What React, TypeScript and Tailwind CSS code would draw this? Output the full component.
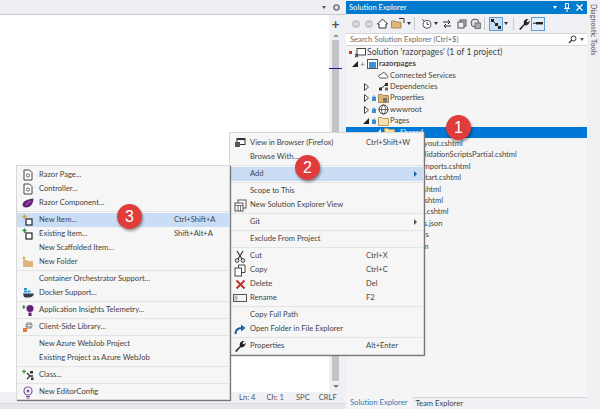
import React from "react";

function Badge({ n, pos }: { n: number; pos: string }) {
  return (
    <div className={`absolute ${pos} w-[25px] h-[25px] rounded-full bg-[#e03c3c] text-white text-[16px] flex items-center justify-center shadow-[1px_2px_3px_rgba(0,0,0,0.4)] font-['Liberation_Sans',sans-serif]`}>
      {n}
    </div>
  );
}

function Doc({ c = "#444" }: { c?: string }) {
  return (
    <svg width="10" height="12" viewBox="0 0 10 12">
      <path d="M1 1 H6.5 L9 3.5 V11 H1 Z" fill="#fff" stroke={c} />
      <circle cx="5" cy="6.5" r="1.6" fill="none" stroke={c} strokeWidth=".8" />
    </svg>
  );
}
function NewItem({ c = "#c9a23f" }: { c?: string }) {
  return (
    <svg width="12" height="12" viewBox="0 0 12 12">
      <rect x="4" y="5" width="6" height="6" fill="#fff" stroke="#222" strokeWidth="1.2" />
      <path d="M2.5 0.5 V5 M0.5 2.5 H4.5" stroke={c} strokeWidth="1.4" />
    </svg>
  );
}
const Blob = () => (
  <svg width="12" height="10" viewBox="0 0 12 10">
    <path d="M0.5 6.5 C0.5 3 6 1 11.5 0.5 C11.5 5 9 9.5 4 9.5 C2 9.5 0.5 8.5 0.5 6.5Z" fill="#68217a" />
    <path d="M4 7 C5 5 7 4 9 3" stroke="#a77bc2" fill="none" />
  </svg>
);
const Folder = () => (
  <svg width="12" height="12" viewBox="0 0 12 12">
    <path d="M1 4 H5 L6 5 H11 V11 H1 Z" fill="#dcb67a" />
    <path d="M2 .5 V4 M.5 2 H3.5" stroke="#c9a23f" />
  </svg>
);
const Docker = () => (
  <svg width="13" height="12" viewBox="0 0 13 12">
    <rect x="2" y="1" width="3" height="2" fill="#2b9bd6" />
    <rect x="2" y="3.5" width="3" height="2" fill="#2b9bd6" />
    <rect x="5.5" y="3.5" width="3" height="2" fill="#2b9bd6" />
    <path d="M1 6.5 H11 C12 6.5 12 7 11.5 8 C10 11 4 11 2 10 Z" fill="#2c3e50" />
  </svg>
);
const Insights = () => (
  <svg width="13" height="13" viewBox="0 0 13 13">
    <path d="M1.8 1 V5 M0 3 H3.6" stroke="#3a8f3a" strokeWidth="1.2" />
    <circle cx="8" cy="4.5" r="3.5" fill="#68217a" />
    <rect x="6.5" y="8.5" width="3" height="3.5" fill="#68217a" />
  </svg>
);
const Library = () => (
  <svg width="12" height="12" viewBox="0 0 12 12">
    <circle cx="7" cy="4.5" r="3.5" fill="#999" />
    <path d="M1 7 H5 V11 H1 Z" fill="#e07b3a" />
    <path d="M5 4.5 H10 M7 1 V8" stroke="#fff" strokeWidth=".6" />
  </svg>
);
const ClassIcon = () => (
  <svg width="12" height="12" viewBox="0 0 12 12">
    <path d="M2 .5 V4.5 M0 2.5 H4" stroke="#3a8f3a" strokeWidth="1.2" />
    <path d="M5 4 L8 7 L5 10 M8 7 H11" stroke="#333" strokeWidth="1.3" fill="none" />
    <rect x="8" y="2" width="3" height="2.5" fill="#333" />
    <rect x="9" y="8.5" width="2.5" height="2.5" fill="#333" />
  </svg>
);
const Bulb = () => (
  <svg width="12" height="13" viewBox="0 0 12 13">
    <circle cx="6" cy="5" r="4" fill="#fff" stroke="#7a4fa8" strokeWidth="1.2" />
    <circle cx="6" cy="5" r="1.5" fill="#7a4fa8" />
    <path d="M4 10.5 H8 M4.5 12 H7.5" stroke="#7a4fa8" />
  </svg>
);
const BrowserIcon = () => (
  <svg width="12" height="12" viewBox="0 0 12 12">
    <rect x="3" y="1.5" width="8" height="6" fill="#fff" stroke="#333" />
    <rect x="3" y="1.5" width="8" height="1.6" fill="#333" />
    <rect x="1" y="5" width="5" height="5" fill="#555" />
  </svg>
);
const NewView = () => (
  <svg width="13" height="13" viewBox="0 0 13 13">
    <rect x="4" y="1" width="8" height="8" fill="#fff" stroke="#555" />
    <rect x="1" y="4" width="8" height="8" fill="#fff" stroke="#555" />
    <path d="M1 6.5 H9 M4 6.5 V12 M6.5 6.5 V12" stroke="#555" strokeWidth=".8" />
  </svg>
);
const Scissors = () => (
  <svg width="12" height="13" viewBox="0 0 12 13">
    <path d="M3 1 L8 9 M9 1 L4 9" stroke="#333" strokeWidth="1.1" />
    <circle cx="3" cy="10.5" r="1.8" fill="none" stroke="#333" />
    <circle cx="9" cy="10.5" r="1.8" fill="none" stroke="#333" />
  </svg>
);
const CopyIcon = () => (
  <svg width="12" height="13" viewBox="0 0 12 13">
    <path d="M4.5 4 V1 H11 V8.5 H8" fill="#fff" stroke="#444" />
    <rect x="1" y="4" width="6.5" height="8" fill="#fff" stroke="#444" />
  </svg>
);
const DeleteIcon = () => (
  <svg width="11" height="11" viewBox="0 0 11 11">
    <path d="M1.5 1.5 L9.5 9.5 M9.5 1.5 L1.5 9.5" stroke="#c8302b" strokeWidth="2" />
  </svg>
);
const RenameIcon = () => (
  <svg width="14" height="10" viewBox="0 0 14 10">
    <rect x=".5" y="1.5" width="13" height="7" fill="#f4f4f4" stroke="#555" />
    <rect x="1.5" y="2.5" width="3" height="5" fill="#bbb" />
  </svg>
);
const OpenIcon = () => (
  <svg width="12" height="11" viewBox="0 0 12 11">
    <path d="M1.5 10 C1.5 6 4 4 8 4" stroke="#1a5fa8" strokeWidth="2" fill="none" />
    <path d="M7 .5 L11.5 4 L7 7.5 Z" fill="#1a5fa8" />
  </svg>
);
const Wrench = ({ c = "#222" }: { c?: string }) => (
  <svg width="12" height="12" viewBox="0 0 12 12">
    <path d="M1 11 L6 6 C5 3 7 .5 10.5 1 L8.5 3 L9 4 L10 4.5 L11.5 2.5 C12 6 9 8 6.5 7.2 L2.5 12 Z" fill={c} />
  </svg>
);

type Row = { t?: string; k?: string; i?: React.ReactNode; sep?: boolean; hl?: boolean; arrow?: boolean; dark?: boolean };

function MenuRows({ rows, labelCls, iconCls }: { rows: Row[]; labelCls: string; iconCls: string }) {
  return (
    <>
      {rows.map((r, idx) =>
        r.sep ? (
          <div key={idx} className="h-[3px] flex items-center">
            <div className="h-px w-full bg-[#e4e4e4]" />
          </div>
        ) : (
          <div key={idx} className={`h-[14px] flex items-center ${r.hl ? "bg-[#c9def5]" : ""}`}>
            <div className={`${iconCls} flex items-center justify-center shrink-0`}>{r.i}</div>
            <div className={`${labelCls} shrink-0 whitespace-nowrap`}>{r.t}</div>
            <div className="flex-1 whitespace-nowrap">{r.k}</div>
            {r.arrow && (
              <div className={`w-0 h-0 mr-[6px] border-y-[3px] border-y-transparent border-l-[3px] ${r.dark ? "border-l-[#1c5f9e]" : "border-l-[#555]"}`} />
            )}
          </div>
        )
      )}
    </>
  );
}

const leftMenu: Row[] = [
  { t: "Razor Page...", i: <Doc /> },
  { t: "Controller...", i: <Doc /> },
  { t: "Razor Component...", i: <Blob /> },
  { sep: true },
  { t: "New Item...", k: "Ctrl+Shift+A", i: <NewItem />, hl: true },
  { t: "Existing Item...", k: "Shift+Alt+A", i: <NewItem c="#2f8f3a" /> },
  { t: "New Scaffolded Item..." },
  { t: "New Folder", i: <Folder /> },
  { sep: true },
  { t: "Container Orchestrator Support..." },
  { t: "Docker Support...", i: <Docker /> },
  { sep: true },
  { t: "Application Insights Telemetry...", i: <Insights /> },
  { sep: true },
  { t: "Client-Side Library...", i: <Library /> },
  { sep: true },
  { t: "New Azure WebJob Project" },
  { t: "Existing Project as Azure WebJob" },
  { sep: true },
  { t: "Class...", i: <ClassIcon /> },
  { sep: true },
  { t: "New EditorConfig", i: <Bulb /> },
];

const midMenu: Row[] = [
  { t: "View in Browser (Firefox)", k: "Ctrl+Shift+W", i: <BrowserIcon /> },
  { t: "Browse With..." },
  { sep: true },
  { t: "Add", hl: true, arrow: true, dark: true },
  { sep: true },
  { t: "Scope to This" },
  { t: "New Solution Explorer View", i: <NewView /> },
  { sep: true },
  { t: "Git", arrow: true },
  { sep: true },
  { t: "Exclude From Project" },
  { sep: true },
  { t: "Cut", k: "Ctrl+X", i: <Scissors /> },
  { t: "Copy", k: "Ctrl+C", i: <CopyIcon /> },
  { t: "Delete", k: "Del", i: <DeleteIcon /> },
  { t: "Rename", k: "F2", i: <RenameIcon /> },
  { sep: true },
  { t: "Copy Full Path" },
  { t: "Open Folder in File Explorer", i: <OpenIcon /> },
  { sep: true },
  { t: "Properties", k: "Alt+Enter", i: <Wrench /> },
];

const Caret = ({ open, c = "#222" }: { open?: boolean; c?: string }) =>
  open ? (
    <svg width="6" height="6" viewBox="0 0 6 6"><path d="M0 6 H6 V0 Z" fill={c} /></svg>
  ) : (
    <svg width="5" height="8" viewBox="0 0 5 8"><path d="M.5 .5 L4.5 4 L.5 7.5 Z" fill="#fff" stroke="#444" /></svg>
  );
const Lock = () => (
  <svg width="4" height="6" viewBox="0 0 4 6"><rect y="2" width="4" height="4" fill="#3d8fd6" /><path d="M1 2 V1 H3 V2" stroke="#3d8fd6" fill="none" strokeWidth=".7" /></svg>
);
const PFolder = () => (
  <svg width="11" height="10" viewBox="0 0 11 10"><path d="M.5 1.5 H4 L5 2.5 H10.5 V9.5 H.5 Z" fill="#f4e0b0" stroke="#b59a5e" /></svg>
);

function Tree({ indent, caret, lock, icon, bold, children, marker }: { indent: string; caret?: "open" | "closed"; lock?: boolean; icon?: React.ReactNode; bold?: boolean; children: React.ReactNode; marker?: React.ReactNode }) {
  return (
    <div className={`h-[11.4px] flex items-center whitespace-nowrap ${indent}`}>
      <div className="w-[8px] flex items-center justify-center shrink-0">
        {caret === "open" ? <Caret open /> : caret === "closed" ? <Caret /> : null}
      </div>
      <div className="w-[7px] flex items-center justify-center shrink-0">{lock ? <Lock /> : marker}</div>
      <div className="w-[12px] flex items-center justify-center shrink-0 mr-[1px]">{icon}</div>
      <span className={bold ? "font-bold" : ""}>{children}</span>
    </div>
  );
}

const Down = ({ c = "#333", cls = "" }: { c?: string; cls?: string }) => (
  <svg width="4" height="3" viewBox="0 0 4 3" className={cls}><path d="M0 0 H4 L2 3 Z" fill={c} /></svg>
);

function Toolbar() {
  const c = "#555";
  return (
    <div className="h-[19px] bg-[#eef0f4] flex items-center pl-[5px]">
      <svg width="10" height="10" viewBox="0 0 10 10"><circle cx="5" cy="5" r="4" fill="#c8c8c8" /><path d="M7 5 H3" stroke="#fff" /></svg>
      <svg width="10" height="10" viewBox="0 0 10 10" className="ml-[3px]"><circle cx="5" cy="5" r="4" fill="#c8c8c8" /><path d="M3 5 H7" stroke="#fff" /></svg>
      <svg width="11" height="11" viewBox="0 0 11 11" className="ml-[3px]"><path d="M5.5 1 L10.5 6 H9 V10 H2 V6 H.5 Z" fill="#fff" stroke="#333" /></svg>
      <svg width="14" height="11" viewBox="0 0 14 11" className="ml-[3px]"><path d="M.5 3 H4 L5 4 H10 V10 H.5 Z" fill="#dcb67a" stroke="#a98b4f" /><path d="M8 .5 H13 V5" fill="none" stroke="#333" /></svg>
      <Down cls="ml-[2px]" />
      <div className="w-px h-[13px] bg-[#c8c9ce] ml-[3px]" />
      <svg width="11" height="11" viewBox="0 0 11 11" className="ml-[6px]"><circle cx="6" cy="6.3" r="4" fill="#fff" stroke={c} /><path d="M6 4 V6.5 H8 M1 1 L3 3" stroke={c} fill="none" /></svg>
      <Down cls="ml-[2px]" />
      <svg width="10" height="10" viewBox="0 0 10 10" className="ml-[4px]"><path d="M1 3 H8 M6 1 L8 3 L6 5 M9 7 H2 M4 5 L2 7 L4 9" stroke="#333" fill="none" /></svg>
      <svg width="10" height="10" viewBox="0 0 10 10" className="ml-[5px]"><rect x="3" y="1" width="6" height="6" fill="#ccc" stroke={c} /><rect x="1" y="3" width="6" height="6" fill="#eee" stroke={c} /></svg>
      <svg width="11" height="11" viewBox="0 0 11 11" className="ml-[3px]"><circle cx="5" cy="5" r="4" fill="#ddd" stroke={c} /><rect x="5" y="5" width="5.5" height="5.5" fill="#aaa" stroke={c} strokeWidth=".7" /></svg>
      <div className="w-px h-[13px] bg-[#c8c9ce] ml-[3px]" />
      <div className="w-[14px] h-[14px] ml-[4px] bg-[#c9def5] border border-[#5c9bd6] flex items-center justify-center">
        <svg width="10" height="10" viewBox="0 0 10 10"><path d="M1.5 1.5 L8 8" stroke="#2a2a2a" strokeWidth="1" /><rect y="0" width="3" height="3" fill="#222" /><rect x="4" y="4" width="3" height="3" fill="#222" /><rect x="7" y="7" width="3" height="3" fill="#222" /></svg>
      </div>
      <Down cls="ml-[1px]" />
      <div className="w-px h-[13px] bg-[#c8c9ce] ml-[5px]" />
      <div className="ml-[4px]"><Wrench /></div>
      <div className="w-[14px] h-[14px] ml-[1px] bg-[#e4edf8] border border-[#5c9bd6] flex items-center justify-center">
        <svg width="10" height="6" viewBox="0 0 10 6"><rect x="3" y="1" width="7" height="2.4" fill="#222" /><rect y="1.7" width="3" height="1" fill="#222" /></svg>
      </div>
    </div>
  );
}

const files: [string, string][] = [
  ["_Layout.cshtml", "pl-[67px]"],
  ["_ValidationScriptsPartial.cshtml", "pl-[67px]"],
  ["_ViewImports.cshtml", "pl-[55px]"],
  ["_ViewStart.cshtml", "pl-[55px]"],
  ["Error.cshtml", "pl-[55px]"],
  ["Index.cshtml", "pl-[55px]"],
  ["Privacy.cshtml", "pl-[55px]"],
  ["appsettings.json", "pl-[43px]"],
  ["Program.cs", "pl-[46px]"],
  ["README.m", "pl-[43px]"],
];

export default function App() {
  return (
    <div className="font-['Lato',sans-serif] relative w-[600px] h-[409px] overflow-hidden bg-[#eef0f4] text-[#444] text-[7.6px] leading-none flex">
      <div className="w-[346px] shrink-0 h-full flex flex-col">
        <div className="h-[15px] flex items-center justify-end pr-[6px] gap-[7px] border-b border-[#c8cad4] bg-[#eeeff5]">
          <Down c="#555" />
          <svg width="7" height="7" viewBox="0 0 7 7"><circle cx="3.5" cy="3.5" r="2.5" fill="none" stroke="#777" strokeWidth="1.6" /></svg>
        </div>
        <div className="flex-1 flex min-h-0">
          <div className="flex-1 bg-white" />
          <div className="w-[17px] flex flex-col bg-[#eef0f4]">
            <div className="w-[13px] flex flex-col flex-1 items-center">
              <div className="text-[#555] font-bold text-[14px] h-[15px] mt-[1px] flex items-center">+</div>
              <div className="w-0 h-0 mt-[3px] mb-[3px] border-x-[3px] border-x-transparent border-b-[3px] border-b-[#999]" />
              <div className="relative w-[7px] flex-1 bg-[#c2c3c9]">
                <div className="absolute left-[-3px] right-[-3px] top-[28px] h-[1px] bg-[#1b1b8f]" />
              </div>
              <div className="w-0 h-0 mt-[4px] mb-[4px] border-x-[3px] border-x-transparent border-t-[3px] border-t-[#777]" />
            </div>
          </div>
        </div>
        <div className="h-[11px] bg-[#f0f1f5] flex items-center pl-[239px] text-[#555] whitespace-nowrap">
          <span>Ln: 4</span><span className="ml-[11px]">Ch: 1</span><span className="ml-[12px]">SPC</span><span className="ml-[9px]">CRLF</span>
        </div>
        <div className="h-[6px] bg-[#e6e7ec] border-t border-[#d8dae0]" />
      </div>

      <div className="w-[241px] shrink-0 h-full flex flex-col">
        <div className="mt-[1px] h-[13px] bg-[#007acc] text-white flex items-center pl-[3px] pr-[4px]">
          <span className="flex-1">Solution Explorer</span>
          <Down c="#fff" cls="mr-[7px]" />
          <svg width="6" height="9" viewBox="0 0 6 9" className="mr-[6px]"><path d="M1.5 .5 H4.5 V5 H1.5 Z M0 5.5 H6 M3 5.5 V9" stroke="#fff" fill="none" /></svg>
          <svg width="7" height="7" viewBox="0 0 7 7"><path d="M.5 .5 L6.5 6.5 M6.5 .5 L.5 6.5" stroke="#fff" strokeWidth="1.3" /></svg>
        </div>
        <Toolbar />
        <div className="h-[13px] bg-white border-y border-[#d5d6dc] flex items-center pl-[4px] pr-[3px] text-[#6b6b6b]">
          <span className="flex-1">Search Solution Explorer (Ctrl+$)</span>
          <svg width="9" height="9" viewBox="0 0 9 9" className="mr-[3px]"><circle cx="5.5" cy="3.5" r="2.5" fill="none" stroke="#333" /><path d="M3.7 5.3 L1 8" stroke="#333" strokeWidth="1.3" /></svg>
          <Down c="#555" />
        </div>
        <div className="flex-1 bg-[#f5f5f5] flex flex-col pt-[1px]">
          <Tree indent="-ml-[7px] text-[8.6px]" marker={<div className="w-[3px] h-[3px] bg-[#c8302b]" />} icon={<svg width="11" height="10" viewBox="0 0 11 10"><rect x="2" y=".5" width="8.5" height="6.5" fill="#fff" stroke="#444" /><path d="M0 6 L3 9 M3 6 L0 9" stroke="#68217a" strokeWidth="1.2" /></svg>}>Solution 'razorpages' (1 of 1 project)</Tree>
          <Tree indent="pl-[5px]" caret="open" marker={<div className="text-[#3a8f3a] font-bold text-[7px]">+</div>} bold icon={<svg width="11" height="10" viewBox="0 0 11 10"><rect x=".5" y=".5" width="10" height="9" fill="#fff" stroke="#555" /><rect x="2" y="3" width="7" height="6" fill="#3d8fd6" /></svg>}>razorpages</Tree>
          <Tree indent="pl-[16px]" icon={<svg width="11" height="9" viewBox="0 0 11 9"><path d="M2.5 7 C0 7 0 3.5 3 3.5 C3.5 1 8 1 8 4 C10.5 4 10.5 7 8.5 7 Z" fill="#fff" stroke="#555" /></svg>}>Connected Services</Tree>
          <Tree indent="pl-[16px]" caret="closed" icon={<svg width="11" height="9" viewBox="0 0 11 9"><rect x="7" y="1" width="3" height="3" fill="#333" /><rect x="1" y="5.5" width="3" height="3" fill="#333" /><rect x="7" y="5.5" width="3" height="3" fill="#666" /><path d="M4 6 L7 3" stroke="#333" /></svg>}>Dependencies</Tree>
          <Tree indent="pl-[16px]" caret="closed" lock icon={<svg width="11" height="10" viewBox="0 0 11 10"><path d="M.5 1.5 H4 L5 2.5 H10.5 V9.5 H.5 Z" fill="#dcb67a" stroke="#a98b4f" /><rect x="5" y="5" width="4" height="4" fill="#777" /></svg>}>Properties</Tree>
          <Tree indent="pl-[16px]" caret="closed" lock icon={<svg width="11" height="11" viewBox="0 0 11 11"><circle cx="5.5" cy="5.5" r="4.5" fill="#fff" stroke="#333" /><ellipse cx="5.5" cy="5.5" rx="2" ry="4.5" fill="none" stroke="#333" strokeWidth=".7" /><path d="M1 5.5 H10" stroke="#333" strokeWidth=".7" /></svg>}>wwwroot</Tree>
          <Tree indent="pl-[16px]" caret="open" lock icon={<PFolder />}>Pages</Tree>
          <div className="h-[11.4px] bg-[#0078d7] text-white flex items-center pl-[29px] whitespace-nowrap">
            <Caret open c="#fff" />
            <div className="ml-[3px] mr-[5px]"><PFolder /></div>
            Shared
          </div>
          {files.map(([t, p]) => (
            <div key={t} className={`h-[11.4px] flex items-center whitespace-nowrap ${p}`}>{t}</div>
          ))}
        </div>
        <div className="h-[12px] bg-[#eef0f4] border-t border-[#d5d6dc] flex items-center">
          <div className="pl-[4px] pr-[4px] h-[12px] -mt-[1px] flex items-center text-[#2a7ab8] bg-[#f5f5f5]">Solution Explorer</div>
          <div className="pl-[4px]">Team Explorer</div>
        </div>
      </div>

      <div className="w-[13px] shrink-0 h-full pl-[3px] pt-[4px]">
        <div className="text-[7.2px] text-[#555] whitespace-nowrap [writing-mode:vertical-rl]">Diagnostic Tools</div>
      </div>

      <div className="absolute left-[229px] top-[132px] w-[195px] bg-[#f6f6f6] border border-[#d8d8d8] shadow-[1px_1px_1px_#777] pt-[3px] pb-[1px]">
        <MenuRows rows={midMenu} iconCls="w-[20px]" labelCls="w-[116px]" />
      </div>
      <div className="absolute left-[16px] top-[165px] w-[214px] bg-[#f6f6f6] border border-[#d8d8d8] shadow-[1px_1px_1px_#777] pt-[2px]">
        <MenuRows rows={leftMenu} iconCls="w-[22px]" labelCls="w-[135px]" />
      </div>

      <Badge n={1} pos="left-[446px] top-[115px]" />
      <Badge n={2} pos="left-[295px] top-[155px]" />
      <Badge n={3} pos="left-[117px] top-[204px]" />
    </div>
  );
}
